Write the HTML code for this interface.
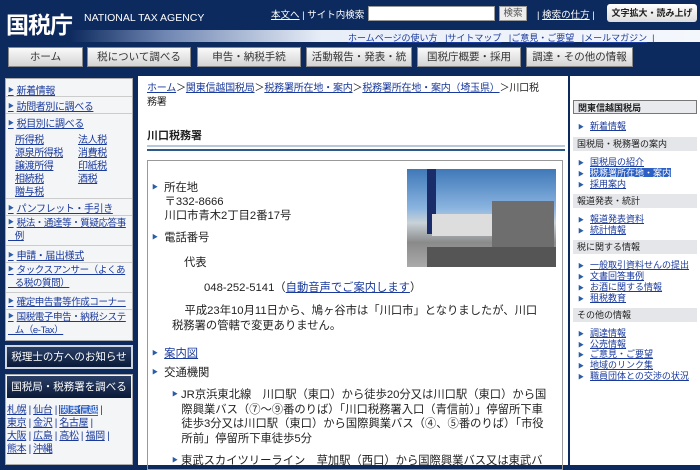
<!DOCTYPE html>
<html><head><meta charset="utf-8"><style>
*{margin:0;padding:0;box-sizing:border-box}
body{width:700px;height:465px;overflow:hidden;background:#0d2a5e;font-family:"Liberation Sans","Noto Sans CJK JP",sans-serif;position:relative;color:#222}
.a{position:absolute;white-space:nowrap}
a,.u{color:#1a3a9c;text-decoration:underline}
.w{color:#fff}
.btn{position:absolute;top:47px;height:20px;background:linear-gradient(#fafafa,#d4d4d4);border:1px solid #888;font-size:10.5px;text-align:center;line-height:18px;color:#333;overflow:hidden}
.ls{font-size:10px;color:#1a3a9c;text-decoration:underline;letter-spacing:-0.4px}
.tri{color:#2a5da8;font-size:6px;text-decoration:none;margin-right:3px;vertical-align:2px}
.rh{position:absolute;left:573px;width:124px;height:14px;background:#e4e6ea;font-size:9px;line-height:14px;padding-left:4px;color:#222}
.ri{position:absolute;left:578px;font-size:9px;color:#1a3a9c;white-space:nowrap}
.ri span.t{color:#2a5da8;font-size:6px;margin-right:6px}
.ri u{color:#1a3a9c}
.m{font-size:11.3px}
</style></head><body>
<div class="a" style="left:0;top:0;width:700px;height:44px;background:#0d2a5e"></div>
<div class="a" style="left:70px;top:30px;width:630px;height:12px;background:linear-gradient(90deg,#0d2a5e 0%,#6f86b2 15%,#e8eef8 40%,#f4f7fc 100%)"></div>
<div class="a w" style="left:6px;top:6px;font-size:23px;font-weight:bold;letter-spacing:-1px">国税庁</div>
<div class="a w" style="left:84px;top:12px;font-size:10.5px">NATIONAL TAX AGENCY</div>
<div class="a w" style="left:271px;top:7px;font-size:9.5px"><span style="text-decoration:underline">本文へ</span> | サイト内検索</div>
<div class="a" style="left:368px;top:6px;width:127px;height:15px;background:#fff;border:1px solid #999"></div>
<div class="a" style="left:499px;top:6px;width:28px;height:15px;background:#eee;border:1px solid #999;font-size:9.5px;text-align:center;line-height:13px;color:#555">検索</div>
<div class="a w" style="left:537px;top:7px;font-size:9.5px">| <span style="text-decoration:underline">検索の仕方</span> |</div>
<div class="a" style="left:607px;top:4px;width:90px;height:18px;background:linear-gradient(#fff,#ddd);border-radius:3px;font-size:9px;font-weight:bold;text-align:center;line-height:18px;color:#222">文字拡大・読み上げ</div>
<div class="a" style="left:348px;top:31px;font-size:9px;color:#1a3a9c"><u>ホームページの使い方</u> &nbsp;&nbsp;|<u>サイトマップ</u> &nbsp;&nbsp;|<u>ご意見・ご要望</u> &nbsp;&nbsp;|<u>メールマガジン</u> &nbsp;|</div>
<div class="btn" style="left:8px;width:75px">ホーム</div>
<div class="btn" style="left:87px;width:104px">税について調べる</div>
<div class="btn" style="left:197px;width:104px">申告・納税手続</div>
<div class="btn" style="left:306px;width:106px">活動報告・発表・統計</div>
<div class="btn" style="left:417px;width:104px">国税庁概要・採用</div>
<div class="btn" style="left:526px;width:107px">調達・その他の情報</div>
<div class="a" style="left:5px;top:78px;width:128px;height:263px;background:#f4f5f7;border:1px solid #aaa"></div>
<div class="a ls" style="left:8px;top:82px"><span class="tri">▶</span>新着情報</div>
<div class="a" style="left:6px;top:96px;width:126px;border-top:1px solid #ccc"></div>
<div class="a ls" style="left:8px;top:98px"><span class="tri">▶</span>訪問者別に調べる</div>
<div class="a" style="left:6px;top:113px;width:126px;border-top:1px solid #ccc"></div>
<div class="a ls" style="left:8px;top:115px"><span class="tri">▶</span>税目別に調べる</div>
<div class="a ls" style="left:15px;top:134px;line-height:13px">所得税<br>源泉所得税<br>譲渡所得<br>相続税<br>贈与税</div>
<div class="a ls" style="left:78px;top:134px;line-height:13px">法人税<br>消費税<br>印紙税<br>酒税</div>
<div class="a" style="left:6px;top:198px;width:126px;border-top:1px solid #ccc"></div>
<div class="a ls" style="left:8px;top:200px"><span class="tri">▶</span>パンフレット・手引き</div>
<div class="a" style="left:6px;top:215px;width:126px;border-top:1px solid #ccc"></div>
<div class="a ls" style="left:8px;top:217px;line-height:13px;font-size:9.5px"><span class="tri">▶</span>税法・通達等・質疑応答事<br>&nbsp;&nbsp;&nbsp;例</div>
<div class="a" style="left:6px;top:245px;width:126px;border-top:1px solid #ccc"></div>
<div class="a ls" style="left:8px;top:247px"><span class="tri">▶</span>申請・届出様式</div>
<div class="a" style="left:6px;top:262px;width:126px;border-top:1px solid #ccc"></div>
<div class="a ls" style="left:8px;top:264px;line-height:13px;font-size:9.5px"><span class="tri">▶</span>タックスアンサー（よくあ<br>&nbsp;&nbsp;&nbsp;る税の質問）</div>
<div class="a" style="left:6px;top:292px;width:126px;border-top:1px solid #ccc"></div>
<div class="a ls" style="left:8px;top:294px;font-size:9.5px"><span class="tri">▶</span>確定申告書等作成コーナー</div>
<div class="a" style="left:6px;top:309px;width:126px;border-top:1px solid #ccc"></div>
<div class="a ls" style="left:8px;top:311px;line-height:13px;font-size:9.5px"><span class="tri">▶</span>国税電子申告・納税システ<br>&nbsp;&nbsp;&nbsp;ム（e-Tax）</div>
<div class="a" style="left:5px;top:345px;width:128px;height:24px;background:linear-gradient(#2b3f66,#0a1a38);border:2px solid #cfd6e2;color:#fff;font-size:10.5px;text-align:center;line-height:20px">税理士の方へのお知らせ</div>
<div class="a" style="left:5px;top:374px;width:128px;height:91px;background:#f4f5f7;border:1px solid #aaa"></div>
<div class="a" style="left:7px;top:376px;width:124px;height:22px;background:linear-gradient(#2b3f66,#0a1a38);color:#fff;font-size:10.5px;text-align:center;line-height:22px">国税局・税務署を調べる</div>
<div class="a ls" style="left:7px;top:404px;line-height:13px;text-decoration:none">
<u>札幌</u> | <u>仙台</u> | <u style="background:#2b5fc4;color:#fff">関東信越</u> |<br><u>東京</u> | <u>金沢</u> | <u>名古屋</u> |<br><u>大阪</u> | <u>広島</u> | <u>高松</u> | <u>福岡</u> |<br><u>熊本</u> | <u>沖縄</u></div>
<div class="a" style="left:138px;top:76px;width:430px;height:389px;background:#fff"></div>
<div class="a" style="left:147px;top:82px;font-size:10px;line-height:14px;color:#222;letter-spacing:-0.2px"><u class="u">ホーム</u>＞<u class="u">関東信越国税局</u>＞<u class="u">税務署所在地・案内</u>＞<u class="u">税務署所在地・案内（埼玉県）</u>＞川口税<br>務署</div>
<div class="a" style="left:147px;top:127px;font-size:11px;font-weight:bold">川口税務署</div>
<div class="a" style="left:147px;top:145px;width:418px;height:6px;border-top:2px solid #b7c8dc;border-bottom:2px solid #2e5a86"></div>
<div class="a" style="left:147px;top:160px;width:416px;height:310px;border:1px solid #999"></div>
<div class="a" style="left:407px;top:169px;width:149px;height:98px;overflow:hidden;background:linear-gradient(#3f78b8 0%,#8ab4e0 40%,#c9d2d8 55%,#8a8a8a 75%,#aaa 100%)">
<div class="a" style="left:20px;top:0;width:9px;height:65px;background:#1b2c6a"></div>
<div class="a" style="left:85px;top:32px;width:62px;height:62px;background:#6e6e6e"></div>
<div class="a" style="left:25px;top:45px;width:60px;height:22px;background:#ddd"></div>
<div class="a" style="left:20px;top:78px;width:129px;height:20px;background:#555"></div></div>
<div class="a m" style="left:152px;top:181px;line-height:14px"><span class="tri">▶</span> 所在地<br>&nbsp;&nbsp;&nbsp; 〒332-8666<br>&nbsp;&nbsp;&nbsp; 川口市青木2丁目2番17号</div>
<div class="a m" style="left:152px;top:229px"><span class="tri">▶</span> 電話番号</div>
<div class="a m" style="left:184px;top:254px">代表</div>
<div class="a m" style="left:204px;top:279px">048-252-5141（<u class="u">自動音声でご案内します</u>）</div>
<div class="a m" style="left:172px;top:304px;line-height:15px">&nbsp;&nbsp;&nbsp;&nbsp;平成23年10月11日から、鳩ヶ谷市は「川口市」となりましたが、川口<br>税務署の管轄で変更ありません。</div>
<div class="a m" style="left:152px;top:345px"><span class="tri">▶</span> <u class="u">案内図</u></div>
<div class="a m" style="left:152px;top:364px"><span class="tri">▶</span> 交通機関</div>
<div class="a m" style="left:172px;top:388px;line-height:14.5px"><span class="tri">▶</span>JR京浜東北線　川口駅（東口）から徒歩20分又は川口駅（東口）から国<br>&nbsp;&nbsp;&nbsp;際興業バス（⑦～⑨番のりば）「川口税務署入口（青信前）」停留所下車<br>&nbsp;&nbsp;&nbsp;徒歩3分又は川口駅（東口）から国際興業バス（④、⑤番のりば）「市役<br>&nbsp;&nbsp;&nbsp;所前」停留所下車徒歩5分</div>
<div class="a m" style="left:172px;top:452px"><span class="tri">▶</span>東武スカイツリーライン　草加駅（西口）から国際興業バス又は東武バ</div>
<div class="a" style="left:570px;top:76px;width:130px;height:389px;background:#fff"></div>
<div class="rh" style="top:100px;background:#e8eaee;border:1px solid #777;font-weight:bold">関東信越国税局</div>
<div class="ri" style="top:119px"><span class="t">▶</span><u>新着情報</u></div>
<div class="rh" style="top:137px">国税局・税務署の案内</div>
<div class="ri" style="top:155px"><span class="t">▶</span><u>国税局の紹介</u></div>
<div class="ri" style="top:166px"><span class="t">▶</span><u style="background:#2b5fc4;color:#fff">税務署所在地・案内</u></div>
<div class="ri" style="top:177px"><span class="t">▶</span><u>採用案内</u></div>
<div class="rh" style="top:194px">報道発表・統計</div>
<div class="ri" style="top:212px"><span class="t">▶</span><u>報道発表資料</u></div>
<div class="ri" style="top:223px"><span class="t">▶</span><u>統計情報</u></div>
<div class="rh" style="top:240px">税に関する情報</div>
<div class="ri" style="top:258px"><span class="t">▶</span><u>一般取引資料せんの提出</u></div>
<div class="ri" style="top:269px"><span class="t">▶</span><u>文書回答事例</u></div>
<div class="ri" style="top:280px"><span class="t">▶</span><u>お酒に関する情報</u></div>
<div class="ri" style="top:291px"><span class="t">▶</span><u>租税教育</u></div>
<div class="rh" style="top:308px">その他の情報</div>
<div class="ri" style="top:326px"><span class="t">▶</span><u>調達情報</u></div>
<div class="ri" style="top:337px"><span class="t">▶</span><u>公売情報</u></div>
<div class="ri" style="top:347px"><span class="t">▶</span><u>ご意見・ご要望</u></div>
<div class="ri" style="top:358px"><span class="t">▶</span><u>地域のリンク集</u></div>
<div class="ri" style="top:369px"><span class="t">▶</span><u>職員団体との交渉の状況</u></div>
</body></html>
